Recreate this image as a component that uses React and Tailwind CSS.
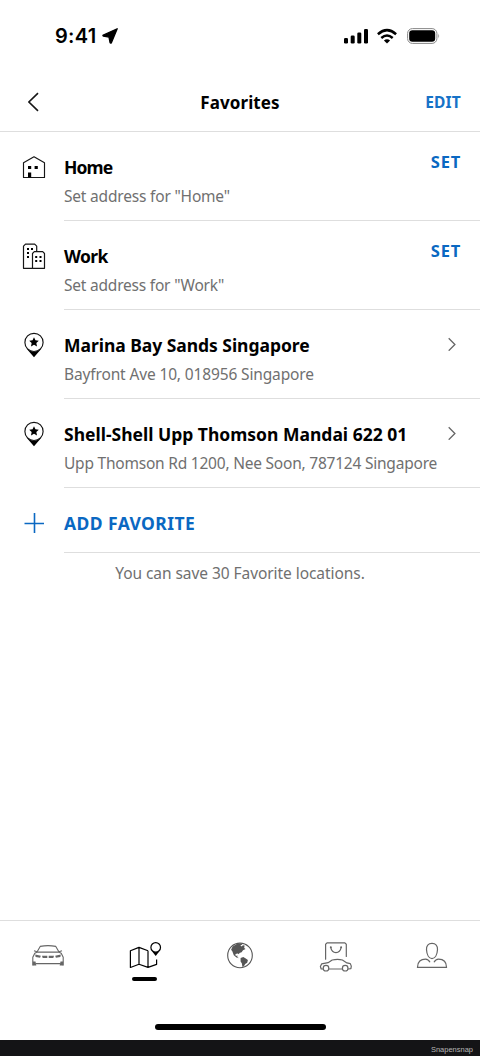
import React, { useState } from "react";

const HomeIcon = () => (
  <svg className="w-6 h-7" viewBox="0 0 24 28" fill="none" stroke="#161616" strokeWidth="1.15">
    <path d="M1.5 24.5V9.8L12 3.8l10.5 6v14.7z" strokeLinejoin="round" />
    <path d="M6 13h3.2v3H6zM12.6 13h3.2v3h-3.2zM6 19.6h3.2v5H6z" fill="#000" stroke="none" />
  </svg>
);

const WorkIcon = () => (
  <svg className="w-6 h-7" viewBox="0 0 24 28" fill="none" stroke="#161616" strokeWidth="1.2" strokeLinejoin="round">
    <path d="M10.5 26.3h-9V4.2l2-2h9.2l2 2v5.3" />
    <path d="M10.5 26.3V11.5l1.8-1.8h8.4l1.8 1.8v14.8z" />
    <path
      d="M5 6h2v2H5zM9 6h2v2H9zM5 10h2v2H5zM5 14h2v2H5zM13.2 14h2v2h-2zM17.5 14h2v2h-2zM13.2 18h2v2h-2zM17.5 18h2v2h-2z"
      fill="#000"
      stroke="none"
    />
  </svg>
);

const PinIcon = () => (
  <svg className="w-6 h-7" viewBox="0 0 24 28" fill="none">
    <path d="M4.4 17.5 12 26.3l7.6-8.8Q12 23.6 4.4 17.5z" fill="#000" />
    <circle cx="12" cy="11.4" r="9.1" fill="#fff" stroke="#111" strokeWidth="1.15" />
    <path d="m12 6.2 1.45 3.1 3.35.4-2.45 2.3.65 3.4-3-1.7-3 1.7.65-3.4L7.2 9.7l3.35-.4z" fill="#000" />
  </svg>
);

const CarIcon = () => (
  <svg className="w-9 h-10" viewBox="0 0 36 40" fill="none" stroke="#666" strokeWidth="1.1" strokeLinejoin="round">
    <path d="M7 12.1 10.2 6.4Q18 4.9 25.8 6.4L29 12.1" />
    <path d="M2.8 25.5v-8.2l2-4 2.5-1.2h21.4l2.5 1.2 2 4v8.2M5.7 23.6h24.6" />
    <path d="M7 11.8 4 10.7M29 11.8l3-1.1" />
    <path d="m5.2 14.6 5.6 1.1-.7 2-4.5-.6zM30.8 14.6l-5.6 1.1.7 2 4.5-.6zM12 15.8h5.3v2.2h-4.6zM18.7 15.8H24l-.7 2.2h-4.6zM2.8 21.5h2.7l.8 4H2.8zM33.2 21.5h-2.7l-.8 4h3.5z" fill="#666" stroke="none" />
  </svg>
);

const MapIcon = () => (
  <svg className="w-9 h-10" viewBox="0 0 36 40" fill="none" stroke="#000" strokeWidth="1.2">
    <path d="M22 10.8 13 7.4l-8.6 3.4v16.7l8.6-3.3 9 3.2 8.6-3v-5M13 7.4v16.8M22 10.8v16.6" strokeLinejoin="round" />
    <path d="m26 11.3 3.7 4.7 3.7-4.7z" fill="#000" stroke="none" />
    <circle cx="29.7" cy="7.4" r="4.8" fill="#fff" />
  </svg>
);

const GlobeIcon = () => (
  <svg className="w-9 h-10" viewBox="0 0 36 40" fill="none">
    <circle cx="18" cy="15.4" r="12.3" stroke="#555" strokeWidth="1.1" />
    <path
      d="m10.6 6.6 5-3 3.7.1 1.1 1.2-2 .2 1 1.5 1.6-1.4 1.6.4-.4 2.5 1.3.8-2.5 1.4-1.4 2-2.2.6-.4 1.4-1.2-.9-2.4.5.4 2 1.7-.3-.2 1.3 1.6 1.4-2.4-.7-2.7-2.3-1.5-4-1.2-1.5z"
      fill="#555"
    />
    <path d="m18.6 18.1 2.7-1 2.5 1.3 2.1 1.7-.7 2.6-2 1.4-1.3 2.1-1.5.7-.5-3.5-1.3-1.8z" fill="#555" />
  </svg>
);

const ShopIcon = () => (
  <svg className="w-9 h-10" viewBox="0 0 36 40" fill="none" stroke="#666" strokeWidth="1.2" strokeLinecap="round">
    <path d="M7.6 19.2V4.2l1.5-1.3h17.7l1.5 1.3v12.3" />
    <path d="M12.8 7.7c1.3 6.6 9 6.6 10.3 0" />
    <circle cx="12.8" cy="7.2" r="1" fill="#666" stroke="none" />
    <circle cx="23.1" cy="7.2" r="1" fill="#666" stroke="none" />
    <path d="M5 29H3.2l-.8-2.5 1.2-2.6 6.5-1.2 4.1-2.7q5.5-1.3 10.2 0l4.5 2.9 3.4.7 1 2.5-.4 2.6-2.6.3M11 29h13" strokeLinejoin="round" />
    <circle cx="8" cy="28.2" r="2.8" />
    <circle cx="27.2" cy="28.2" r="2.8" />
  </svg>
);

const ProfileIcon = () => (
  <svg className="w-9 h-10" viewBox="0 0 36 40" fill="none" stroke="#666" strokeWidth="1.2">
    <path d="M18 3.4c-3.8 0-5.7 2.3-5.5 6.2.3 5 2.4 9 5.5 9s5.2-4 5.5-9c.2-3.9-1.7-6.2-5.5-6.2z" />
    <path d="M16 22.3c-1-2-2.6-3.2-4.5-3.2-4.6 0-8 2.3-8 8.2h29c0-5.9-3.4-8.2-8-8.2-1.9 0-3.5 1.2-4.5 3.2" />
  </svg>
);

const favorites = [
  { title: "Home", detail: 'Set address for "Home"', icon: HomeIcon, titleClass: "text-[17.5px] tracking-[-0.85px]", detailClass: "tracking-[-0.19px]", canSet: true },
  { title: "Work", detail: 'Set address for "Work"', icon: WorkIcon, titleClass: "text-[17.5px] tracking-[-0.65px]", detailClass: "tracking-[-0.21px]", canSet: true },
  { title: "Marina Bay Sands Singapore", detail: "Bayfront Ave 10, 018956 Singapore", icon: PinIcon, titleClass: "text-[17.5px] tracking-[-0.04px]", detailClass: "tracking-[-0.14px]" },
  { title: "Shell-Shell Upp Thomson Mandai 622 01", detail: "Upp Thomson Rd 1200, Nee Soon, 787124 Singapore", icon: PinIcon, titleClass: "text-[17.5px] tracking-[0px]", detailClass: "tracking-[-0.22px]" },
];

const tabs = [
  { id: "car", icon: CarIcon },
  { id: "map", icon: MapIcon },
  { id: "explore", icon: GlobeIcon },
  { id: "shop", icon: ShopIcon },
  { id: "profile", icon: ProfileIcon },
];

const StatusBar = () => (
  <div className="h-[72px] flex items-center justify-between pl-[55px] pr-[39px]">
    <div className="flex items-center gap-[5px]">
      <span className="w-[42px] whitespace-nowrap font-['Inter',sans-serif] text-[20px] leading-6 font-semibold tracking-[0.3px]">9:41</span>
      <svg className="w-4 h-4" viewBox="0 0 16 16">
        <path
          d="M15.2.8 9.4 14.7Q8.6 15.6 8 14.5L7 9.1 1.5 8.2Q.4 7.7 1.3 7z"
          stroke="#000"
          strokeWidth="1.3"
          strokeLinejoin="round"
        />
      </svg>
    </div>
    <div className="flex items-center">
      <svg className="w-6 h-4" viewBox="0 0 24 16">
        <rect x="0" y="10" width="4" height="5.5" rx="1.3" />
        <rect x="6.7" y="7.5" width="4" height="8" rx="1.3" />
        <rect x="13.3" y="4.5" width="4" height="11" rx="1.3" />
        <rect x="20" y="1" width="4" height="14.5" rx="1.3" />
      </svg>
      <svg className="w-5 h-4 ml-[9px]" viewBox="0 0 20 16" fill="none" stroke="#000" strokeWidth="2.5">
        <path d="M.9 6.2q9.1-8.1 18.2 0M4.3 10q5.7-4.9 11.4 0" />
        <path d="M6.9 12.5q3.1-2.3 6.2 0L10 15.5z" fill="#000" stroke="none" />
      </svg>
      <svg className="w-[34px] h-4 ml-[10px]" viewBox="0 0 34 16">
        <rect x=".6" y=".6" width="29.3" height="14.8" rx="4.8" fill="none" stroke="#888" strokeWidth="1" />
        <rect x="2.2" y="2.3" width="26" height="11.4" rx="3.2" />
        <path d="M31.3 5.5q1.8 2.5 0 5z" fill="#888" />
      </svg>
    </div>
  </div>
);

const FavoriteRow = ({ item }) => {
  const Icon = item.icon;
  return (
    <div className="h-[89px] flex">
      <div className="w-[64px] pl-[22px] pt-[21px] shrink-0">
        <Icon />
      </div>
      <div className="flex-1 flex justify-between border-b border-[#dedede] pr-5">
        <div className="pt-[23px] whitespace-nowrap">
          <div className={`leading-6 font-bold ${item.titleClass}`}>{item.title}</div>
          <div className={`mt-[5px] text-[15.5px] leading-6 text-[#707070] ${item.detailClass}`}>{item.detail}</div>
        </div>
        {item.canSet ? (
          <button className="h-6 mt-[18px] text-[16.5px] leading-6 font-bold tracking-[0.8px] text-[#0a68c2] -mr-px">SET</button>
        ) : (
          <svg className="w-2 h-[14px] mt-[27px] mr-1 -ml-4 shrink-0" viewBox="0 0 8 14" fill="none" stroke="#666" strokeWidth="1.3">
            <path d="m.7 1.3 6.2 6.2-6.2 6.2" />
          </svg>
        )}
      </div>
    </div>
  );
};

export default function App() {
  const [activeTab, setActiveTab] = useState("map");

  return (
    <div className="w-[480px] h-[1056px] flex flex-col overflow-hidden bg-white text-black font-['Noto_Sans',sans-serif]">
      <StatusBar />

      <header className="h-[60px] grid grid-cols-3 items-center border-b border-[#dedede] pl-7 pr-[19px]">
        <button aria-label="Back">
          <svg className="w-[11px] h-5" viewBox="0 0 11 20" fill="none" stroke="#161616" strokeWidth="1.6">
            <path d="M10 1.2.9 10l9.1 8.8" />
          </svg>
        </button>
        <h1 className="text-center text-[17px] leading-6 font-bold pt-0.5 pr-[9px] tracking-[0.1px]">Favorites</h1>
        <button className="text-right text-[15.5px] leading-6 font-bold tracking-[0.2px] text-[#1672c7]">EDIT</button>
      </header>

      <main className="flex-1">
        {favorites.map((item) => (
          <FavoriteRow key={item.title} item={item} />
        ))}
        <button className="w-full h-[65px] flex text-[#0a68c2]">
          <span className="w-[64px] h-full flex items-center pl-6 pt-[5px]">
            <svg className="w-5 h-5" viewBox="0 0 20 20" stroke="currentColor" strokeWidth="1.6">
              <path d="M10.5 0v20M.5 10.5h20" />
            </svg>
          </span>
          <span className="flex-1 h-full pt-[23px] border-b border-[#dedede] text-left text-[17.5px] leading-6 font-bold tracking-[0.42px]">
            ADD FAVORITE
          </span>
        </button>
        <p className="mt-[8px] text-center text-[15.5px] leading-6 tracking-[-0.06px] text-[#707070]">You can save 30 Favorite locations.</p>
      </main>

      <nav className="h-[104px] grid grid-cols-5 border-t border-[#dedede] pt-[19px]">
        {tabs.map(({ id, icon: Icon }) => (
          <button key={id} onClick={() => setActiveTab(id)} aria-label={id} className="flex flex-col items-center">
            <Icon />
            {activeTab === id && <span className="-mt-[3px] w-[25px] h-[3.5px] rounded-full bg-black" />}
          </button>
        ))}
      </nav>
      <div className="h-4 flex justify-center">
        <div className="w-[171px] h-[6px] rounded-full bg-black" />
      </div>
      <footer className="h-4 flex items-center justify-end bg-[#141416] pr-[7px] pt-[3px] text-[7.5px] leading-3 text-[#b5b5b5] font-['Liberation_Sans',sans-serif]">
        Snapensnap
      </footer>
    </div>
  );
}
